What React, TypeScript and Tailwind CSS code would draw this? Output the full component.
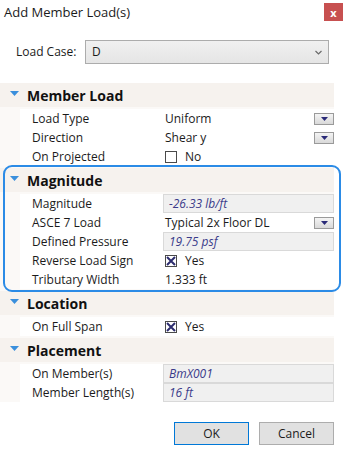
import React from "react";

const font = { fontFamily: '"Open Sans", "Noto Sans", sans-serif' };

function Triangle() {
   return (
      <svg width="9" height="6" viewBox="0 0 9 6" className="mr-[8px] mt-[-2px]">
         <path d="M0 0 L9 0 L4.5 5 Z" fill="#3a8fdc" />
      </svg>
   );
}

function DropButton() {
   return (
      <div className="ml-auto flex h-[12px] w-[20px] items-center justify-center border border-[#9a9a9a] bg-gradient-to-b from-[#f4f4f4] to-[#d9d9d9]">
         <svg width="7" height="4" viewBox="0 0 7 4">
            <path d="M0 0 L7 0 L3.5 4 Z" fill="#2a2a78" />
         </svg>
      </div>
   );
}

function CheckBox({ checked }: { checked: boolean }) {
   return (
      <div className="mr-[8px] flex h-[12px] w-[12px] items-center justify-center border border-[#4a4a4a] bg-white">
         {checked && (
            <svg width="10" height="10" viewBox="0 0 10 10">
               <path d="M1 1 L9 9 M9 1 L1 9" stroke="#2c2c6e" strokeWidth="2" />
            </svg>
         )}
      </div>
   );
}

function Header({ title }: { title: string }) {
   return (
      <div className="flex h-[24px] items-center bg-[#f6f2ee] pl-[10px] text-[14px] font-bold text-[#111]">
         <Triangle />
         {title}
      </div>
   );
}

type RowProps = {
   label: string;
   value: string;
   kind?: "text" | "drop" | "box" | "check" | "uncheck";
};

function Row({ label, value, kind = "text" }: RowProps) {
   return (
      <div className="ml-[20px] flex h-[19px] items-center bg-white text-[12px] text-[#1b1b1b]">
         <div className="w-[143px] pl-[12px]">{label}</div>
         {kind === "box" ? (
            <div className="flex h-[19px] flex-1 items-center border border-[#d9d9d9] bg-[#f0f0f0] pl-[5px] italic text-[#3b3b8a]">
               {value}
            </div>
         ) : (
            <div className="flex flex-1 items-center pl-[2px]">
               {kind === "check" && <CheckBox checked />}
               {kind === "uncheck" && <CheckBox checked={false} />}
               <span>{value}</span>
               {kind === "drop" && <DropButton />}
            </div>
         )}
      </div>
   );
}

export default function App() {
   return (
      <div className="relative h-[457px] w-[344px] overflow-hidden bg-white text-[#1b1b1b]" style={font}>
         <div className="flex h-[30px] items-start justify-between">
            <div className="pl-[4px] pt-[3px] text-[13px]">Add Member Load(s)</div>
            <div className="mr-[1px] mt-[3px] flex h-[18px] w-[19px] items-center justify-center bg-[#c75050] text-[11px] font-bold leading-none text-white">
               x
            </div>
         </div>

         <div className="mt-[10px] flex h-[24px] items-center text-[12px]">
            <div className="w-[85px] pl-[16px]">Load Case:</div>
            <div className="flex h-[24px] w-[244px] items-center justify-between border border-[#acacac] bg-gradient-to-b from-[#f0f0f0] to-[#e5e5e5] pl-[6px] pr-[6px]">
               <span>D</span>
               <svg width="7" height="5" viewBox="0 0 7 5">
                  <path d="M0.5 1 L3.5 4 L6.5 1" stroke="#6a6a6a" strokeWidth="1.2" fill="none" />
               </svg>
            </div>
         </div>

         <div className="mt-[19px] w-[334px]">
            <div className="bg-[#fbf9f7] pb-[2px]">
               <Header title="Member Load" />
               <div className="mt-[2px]">
                  <Row label="Load Type" value="Uniform" kind="drop" />
                  <Row label="Direction" value="Shear y" kind="drop" />
                  <Row label="On Projected" value="No" kind="uncheck" />
               </div>
            </div>

            <div className="relative bg-[#fbf9f7] pb-[2px]">
               <Header title="Magnitude" />
               <div className="mt-[2px]">
                  <Row label="Magnitude" value="-26.33 lb/ft" kind="box" />
                  <Row label="ASCE 7 Load" value="Typical 2x Floor DL" kind="drop" />
                  <Row label="Defined Pressure" value="19.75 psf" kind="box" />
                  <Row label="Reverse Load Sign" value="Yes" kind="check" />
                  <Row label="Tributary Width" value="1.333 ft" />
               </div>
               <div className="pointer-events-none absolute bottom-[-1px] left-[3px] right-[-7px] top-[-3px] rounded-[9px] border-2 border-[#2b8be6]" />
            </div>

            <div className="bg-[#fbf9f7] pb-[2px]">
               <Header title="Location" />
               <div className="mt-[2px]">
                  <Row label="On Full Span" value="Yes" kind="check" />
               </div>
            </div>

            <div className="bg-[#fbf9f7]">
               <Header title="Placement" />
               <div className="mt-[2px]">
                  <Row label="On Member(s)" value="BmX001" kind="box" />
                  <Row label="Member Length(s)" value="16 ft" kind="box" />
               </div>
            </div>
         </div>

         <div className="mt-[20px] flex justify-end gap-[10px] pr-[10px] text-[12px]">
            <button className="h-[23px] w-[75px] border border-[#0078d7] bg-[#e1e1e1]">OK</button>
            <button className="h-[23px] w-[75px] border border-[#adadad] bg-[#e1e1e1]">Cancel</button>
         </div>
      </div>
   );
}
